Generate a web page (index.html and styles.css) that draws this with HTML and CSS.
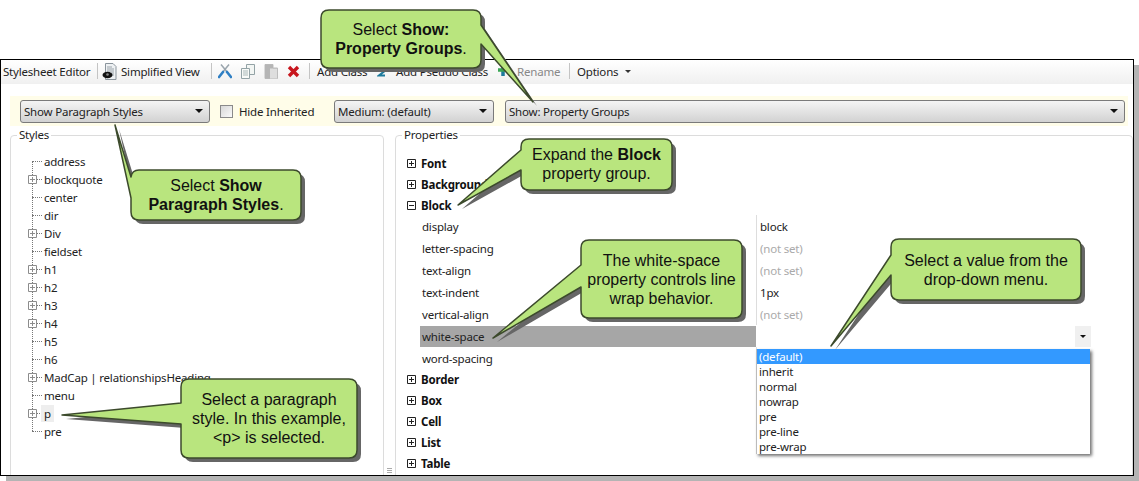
FILE: index.html
```html
<!DOCTYPE html>
<html lang="en">
<head>
  <meta charset="UTF-8">
  <title>Stylesheet Editor</title>
  <link rel="stylesheet" href="styles.css">
</head>
<body>
  <div class="window">
    <div class="toolbar">
      <span class="tool-title">Stylesheet Editor</span>
      <i class="sep"></i>
      <svg class="tool-icon icon-view" width="15" height="17" viewBox="0 0 15 17"><path d="M3.5 .5H11L14 3.5V16.5H3.5Z" fill="#eef1f3" stroke="#8a949c"/><path d="M5 4H10M5 6H12M5 8H12M9 10H12M9 12H12" stroke="#9aa3aa"/><ellipse cx="5.500" cy="12" rx="5" ry="3.200" fill="#111"/><circle cx="5.500" cy="11.500" r="1.300" fill="#888"/></svg>
      <span class="label-view">Simplified View</span>
      <i class="sep"></i>
      <svg class="tool-icon icon-cut" width="14" height="15" viewBox="0 0 14 15"><path d="M3 .5L10 9M11 .5L4 9" stroke="#9aa5ad" stroke-width="1.500" fill="none"/><path d="M9 8L13 13M5 8L1 13" stroke="#2f7fc4" stroke-width="2.600" stroke-linecap="round"/></svg>
      <svg class="tool-icon icon-copy" width="14" height="15" viewBox="0 0 14 15"><path d="M5.500 .5H13.500V10.500H5.500Z" fill="#f3f6f4" stroke="#93a3a6"/><path d="M.5 4.500H8.500V14.500H.5Z" fill="#f8faf8" stroke="#93a3a6"/><path d="M2 7H7M2 9H7M2 11H7" stroke="#a9b8b8"/></svg>
      <svg class="tool-icon icon-paste" width="14" height="15" viewBox="0 0 14 15"><path d="M1 .5H9V4H13.500V14.500H1Z" fill="#c9c9c9" stroke="#bcbcbc"/><path d="M6 5H13V14.500H6Z" fill="#dedede"/><path d="M1 .5H9V4H6V14.500H1Z" fill="#b5b5b5"/></svg>
      <svg class="tool-icon icon-del" width="13" height="13" viewBox="0 0 13 13"><path d="M2 2L11 11M11 2L2 11" stroke="#c8161e" stroke-width="3.400"/></svg>
      <i class="sep"></i>
      <span class="label-add">Add Class</span>
      <svg class="tool-icon icon-class" width="10" height="11" viewBox="0 0 10 11"><path d="M9 1.500H2.500L7 5.500L2 9.500H8" fill="none" stroke="#1d7a9c" stroke-width="2.200"/></svg>
      <span class="label-pseudo">Add Pseudo Class</span>
      <svg class="tool-icon icon-plus" width="12" height="12" viewBox="0 0 12 12"><path d="M6 1V11" stroke="#1d7a9c" stroke-width="3.500"/><path d="M1 5H11" stroke="#3aa655" stroke-width="3.500"/></svg>
      <span class="label-off">Rename</span>
      <i class="sep"></i>
      <span class="label-options">Options</span>
      <i class="caret-small"></i>
    </div>

    <div class="filterbar">
      <div class="combo combo-styles"><span>Show Paragraph Styles</span><i class="caret"></i></div>
      <span class="check"></span>
      <span class="check-label">Hide Inherited</span>
      <div class="combo combo-medium"><span>Medium: (default)</span><i class="caret"></i></div>
      <div class="combo combo-show"><span>Show: Property Groups</span><i class="caret"></i></div>
    </div>

    <div class="panels">
      <fieldset class="panel panel-styles">
        <legend>Styles</legend>
        <ul class="tree">
          <li><i class="twig"></i><span>address</span></li>
          <li><svg class="plus" width="9" height="9" viewBox="0 0 9 9"><use href="#treePlus"/></svg><i class="twig short"></i><span>blockquote</span></li>
          <li><i class="twig"></i><span>center</span></li>
          <li><i class="twig"></i><span>dir</span></li>
          <li><svg class="plus" width="9" height="9" viewBox="0 0 9 9"><use href="#treePlus"/></svg><i class="twig short"></i><span>Div</span></li>
          <li><i class="twig"></i><span>fieldset</span></li>
          <li><svg class="plus" width="9" height="9" viewBox="0 0 9 9"><use href="#treePlus"/></svg><i class="twig short"></i><span>h1</span></li>
          <li><svg class="plus" width="9" height="9" viewBox="0 0 9 9"><use href="#treePlus"/></svg><i class="twig short"></i><span>h2</span></li>
          <li><svg class="plus" width="9" height="9" viewBox="0 0 9 9"><use href="#treePlus"/></svg><i class="twig short"></i><span>h3</span></li>
          <li><svg class="plus" width="9" height="9" viewBox="0 0 9 9"><use href="#treePlus"/></svg><i class="twig short"></i><span>h4</span></li>
          <li><i class="twig"></i><span>h5</span></li>
          <li><i class="twig"></i><span>h6</span></li>
          <li><svg class="plus" width="9" height="9" viewBox="0 0 9 9"><use href="#treePlus"/></svg><i class="twig short"></i><span>MadCap | relationshipsHeading</span></li>
          <li><i class="twig"></i><span>menu</span></li>
          <li><svg class="plus" width="9" height="9" viewBox="0 0 9 9"><use href="#treePlus"/></svg><i class="twig short"></i><span class="picked">p</span></li>
          <li><i class="twig"></i><span>pre</span></li>
        </ul>
      </fieldset>

      <div class="splitter"><i></i></div>

      <fieldset class="panel panel-props">
        <legend>Properties</legend>
        <div class="group"><svg width="9" height="9" viewBox="0 0 9 9"><use href="#groupPlus"/></svg><b>Font</b></div>
        <div class="group"><svg width="9" height="9" viewBox="0 0 9 9"><use href="#groupPlus"/></svg><b>Background</b></div>
        <div class="group group-open"><svg width="9" height="9" viewBox="0 0 9 9"><path d="M.5 .5H8.500V8.500H.5ZM2 4.500H7" fill="none" stroke="#222"/></svg><b>Block</b></div>
        <div class="prop"><span class="prop-name">display</span><span class="prop-value">block</span></div>
        <div class="prop"><span class="prop-name">letter-spacing</span><span class="prop-value unset">(not set)</span></div>
        <div class="prop"><span class="prop-name">text-align</span><span class="prop-value unset">(not set)</span></div>
        <div class="prop"><span class="prop-name">text-indent</span><span class="prop-value">1px</span></div>
        <div class="prop"><span class="prop-name">vertical-align</span><span class="prop-value unset">(not set)</span></div>
        <div class="prop prop-active">
          <span class="prop-name">white-space</span>
          <span class="prop-value">
            <i class="drop-btn"><i class="caret"></i></i>
            <ul class="dropdown">
              <li class="current">(default)</li>
              <li>inherit</li>
              <li>normal</li>
              <li>nowrap</li>
              <li>pre</li>
              <li>pre-line</li>
              <li>pre-wrap</li>
            </ul>
          </span>
        </div>
        <div class="prop"><span class="prop-name">word-spacing</span><span class="prop-value"></span></div>
        <div class="group"><svg width="9" height="9" viewBox="0 0 9 9"><use href="#groupPlus"/></svg><b>Border</b></div>
        <div class="group"><svg width="9" height="9" viewBox="0 0 9 9"><use href="#groupPlus"/></svg><b>Box</b></div>
        <div class="group"><svg width="9" height="9" viewBox="0 0 9 9"><use href="#groupPlus"/></svg><b>Cell</b></div>
        <div class="group"><svg width="9" height="9" viewBox="0 0 9 9"><use href="#groupPlus"/></svg><b>List</b></div>
        <div class="group"><svg width="9" height="9" viewBox="0 0 9 9"><use href="#groupPlus"/></svg><b>Table</b></div>
      </fieldset>
    </div>
  </div>

  <!-- callout shapes, the text sits on top in .note -->
  <svg class="callouts" width="1139" height="481" viewBox="0 0 1139 481">
    <defs>
      <path id="treePlus" d="M.5 .5H8.500V8.500H.5ZM2 4.500H7M4.500 2V7" fill="#fff" stroke="#8c8c8c"/>
      <path id="groupPlus" d="M.5 .5H8.500V8.500H.5ZM2 4.500H7M4.500 2V7" fill="#fff" stroke="#222"/>
      <path id="c1" d="M329 10H473Q481 10 481 18V25L533 102L481 44V60Q481 68 473 68H329Q321 68 321 60V18Q321 10 329 10Z"/>
      <path id="c2" d="M139 170H293Q301 170 301 178V212Q301 220 293 220H139Q131 220 131 212V198L115 125L131 177Q132 170 139 170Z"/>
      <path id="c3" d="M529 139H664Q672 139 672 147V182Q672 190 664 190H529Q521 190 521 182V170L458 205L521 150V147Q521 139 529 139Z"/>
      <path id="c4" d="M589 240H734Q742 240 742 248V310Q742 318 734 318H589Q581 318 581 310V287L493 338L581 265V248Q581 240 589 240Z"/>
      <path id="c5" d="M899 239H1073Q1081 239 1081 247V292Q1081 300 1073 300H899Q891 300 891 292V275L831 346L891 255V247Q891 239 899 239Z"/>
      <path id="c6" d="M189 379H349Q357 379 357 387V450Q357 458 349 458H189Q181 458 181 450V424L62 415L181 403V387Q181 379 189 379Z"/>
    </defs>
    <g class="shape-shadow" transform="translate(4 4)">
      <use href="#c1"/><use href="#c2"/><use href="#c3"/><use href="#c4"/><use href="#c5"/><use href="#c6"/>
    </g>
    <g class="shape">
      <use href="#c1"/><use href="#c2"/><use href="#c3"/><use href="#c4"/><use href="#c5"/><use href="#c6"/>
    </g>
  </svg>

  <div class="note note-1">Select <b>Show:<br>Property Groups</b>.</div>
  <div class="note note-2">Select <b>Show<br>Paragraph Styles</b>.</div>
  <div class="note note-3">Expand the <b>Block</b><br>property group.</div>
  <div class="note note-4">The white-space<br>property controls line<br>wrap behavior.</div>
  <div class="note note-5">Select a value from the<br>drop-down menu.</div>
  <div class="note note-6">Select a paragraph<br>style. In this example,<br>&lt;p&gt; is selected.</div>
</body>
</html>
```

FILE: styles.css
```css
/* page */
html, body {
  margin: 0;
  height: 481px;
  overflow: hidden;
  background: #fff;
}

body {
  position: relative;
  padding-top: 59px;
  box-sizing: border-box;
  font-family: "Noto Sans", "Open Sans", sans-serif;
  font-size: 11.5px;
  letter-spacing: -0.2px;
  color: #222;
}

ul {
  list-style: none;
  margin: 0;
  padding: 0;
}

i {
  font-style: normal;
}

/* window */
.window {
  width: 1134px;
  height: 417px;
  box-sizing: border-box;
  border: 1px solid #000;
  background: #fff;
  box-shadow: 6px 6px 0 #b4b4b4;
  overflow: hidden;
  display: flex;
  flex-direction: column;
}

/* toolbar */
.toolbar {
  flex: none;
  height: 24px;
  box-sizing: border-box;
  padding: 0 0 2px 2px;
  display: flex;
  align-items: center;
  background: linear-gradient(#ffffff, #f0f0f0);
  white-space: nowrap;
}

.tool-title {
  width: 90px;
}

.sep {
  flex: none;
  width: 1px;
  height: 16px;
  margin: 0 7px 0 4px;
  background: #c4c4c4;
}

.tool-icon {
  flex: none;
}

.icon-view {
  margin-left: -3px;
}

.label-view {
  width: 86px;
  margin-left: 4px;
}

.icon-cut {
  margin-left: -1px;
}

.icon-copy,
.icon-paste {
  margin-left: 9px;
}

.icon-del {
  margin: 0 5px 0 9px;
}

.label-add {
  width: 52px;
}

.icon-class {
  margin: 0 9px 0 8px;
}

.label-pseudo {
  width: 94px;
}

.icon-plus {
  margin: 0 8px 0 7px;
}

.label-off {
  width: 48px;
  color: #888;
}

.label-options {
  width: 42px;
}

.caret-small {
  width: 0;
  height: 0;
  margin-left: 6px;
  border: 3px solid transparent;
  border-top-color: #333;
  border-bottom: 0;
}

/* filter row */
.filterbar {
  flex: none;
  height: 30px;
  margin: 12px 5px 0 9px;
  padding: 0 3px 0 10px;
  display: flex;
  align-items: center;
  box-sizing: border-box;
  background: #fffde9;
}

.combo {
  flex: none;
  height: 23px;
  box-sizing: border-box;
  padding: 0 6px 0 3px;
  display: flex;
  align-items: center;
  justify-content: space-between;
  border: 1px solid #7a7a7a;
  border-radius: 3px;
  background: linear-gradient(#f4f4f4, #d2d2d2);
}

.combo-styles {
  width: 190px;
}

.combo-medium {
  width: 160px;
  margin-left: 20px;
}

.combo-show {
  width: 620px;
  margin-left: 11px;
}

.caret {
  display: block;
  width: 0;
  height: 0;
  border-left: 4px solid transparent;
  border-right: 4px solid transparent;
  border-top: 4px solid #111;
}

.check {
  flex: none;
  width: 13px;
  height: 13px;
  box-sizing: border-box;
  margin-left: 10px;
  border: 1px solid #8a8a8a;
  background: linear-gradient(135deg, #d8d8d8, #fafafa);
}

.check-label {
  flex: none;
  width: 75px;
  margin-left: 6px;
  white-space: nowrap;
}

/* panels */
.panels {
  flex: 1;
  min-height: 0;
  margin: 1px 0 0 9px;
  display: flex;
}

.panel {
  margin: 0;
  padding: 0;
  min-width: 0;
  height: 360px;
  border: 1px solid #dcdcdc;
  border-radius: 4px;
}

.panel legend {
  margin-left: 6px;
  padding: 0 2px;
  line-height: 16px;
}

.panel-styles {
  flex: none;
  box-sizing: border-box;
  width: 374px;
}

.splitter {
  flex: none;
  width: 11px;
  display: flex;
  justify-content: center;
  align-items: flex-end;
  padding-bottom: 2px;
}

.splitter i {
  width: 5px;
  height: 5px;
  background: repeating-linear-gradient(#aaa 0 1px, transparent 1px 2px);
}

.panel-props {
  flex: 1;
  box-sizing: border-box;
  padding-top: 10px;
}

/* tree */
.tree {
  position: relative;
  margin: 9px 0 0 21px;
}

.tree::before {
  content: "";
  position: absolute;
  left: 0;
  top: 9px;
  bottom: 9px;
  border-left: 1px dotted #777;
}

.tree li {
  height: 18px;
  display: flex;
  align-items: center;
  white-space: nowrap;
}

.twig {
  width: 10px;
  margin-right: 2px;
  border-top: 1px dotted #777;
}

.twig.short {
  width: 5px;
}

.plus {
  flex: none;
  margin-left: -4px;
  position: relative;
}

.picked {
  padding: 1px 3px;
  margin-left: -3px;
  background: #eeeeee;
}

/* property grid */
.group {
  height: 21px;
  margin-left: 11px;
  display: flex;
  align-items: center;
  gap: 5px;
}

.group-open {
  height: 20px;
}

.group svg {
  flex: none;
}

.group b {
  font-weight: 700;
  color: #111;
}

.prop {
  height: 22px;
  margin-left: 24px;
  display: flex;
  align-items: center;
}

.prop-name {
  width: 334px;
  padding-left: 2px;
}

.prop-value {
  position: relative;
  width: 331px;
  height: 100%;
  padding-left: 3px;
  display: flex;
  align-items: center;
  border-left: 1px solid #dddddd;
}

.prop-active .prop-name {
  height: 21px;
  line-height: 21px;
  background: #a6a6a6;
}

.prop-active .prop-value {
  border-left-color: transparent;
}

.unset {
  color: #aaa;
}

.drop-btn {
  position: absolute;
  right: 0;
  top: 1px;
  width: 16px;
  height: 21px;
  display: flex;
  align-items: center;
  justify-content: center;
  background: #f0f0f0;
}

.drop-btn .caret {
  border-left-width: 3px;
  border-right-width: 3px;
  border-top-width: 3px;
}

.dropdown {
  position: absolute;
  left: -1px;
  top: 24px;
  width: 333px;
  z-index: 5;
  background: #fff;
  border-left: 1px solid #bbb;
  box-shadow: 2px 2px 3px rgba(0, 0, 0, .55);
}

.dropdown li {
  height: 15px;
  line-height: 15px;
  padding-left: 2px;
}

.dropdown .current {
  background: #3399ff;
  color: #fff;
}

/* callouts */
.callouts {
  position: absolute;
  left: 0;
  top: 0;
  z-index: 10;
}

.shape-shadow {
  fill: #666;
}

.shape {
  fill: #b9e57e;
  stroke: #3c4a2c;
  stroke-width: 1.5;
  stroke-linejoin: round;
}

.note {
  position: absolute;
  z-index: 11;
  box-sizing: border-box;
  font-family: "Liberation Sans", Arial, sans-serif;
  font-size: 16px;
  line-height: 19px;
  letter-spacing: 0;
  text-align: center;
  color: #111;
  white-space: nowrap;
}

.note-1 { left: 321px; top: 10px; width: 160px; height: 58px; padding-top: 10px; }
.note-2 { left: 131px; top: 170px; width: 170px; height: 50px; padding-top: 6px; }
.note-3 { left: 521px; top: 139px; width: 151px; height: 51px; padding-top: 6px; }
.note-4 { left: 581px; top: 240px; width: 161px; height: 78px; padding-top: 11px; }
.note-5 { left: 891px; top: 239px; width: 190px; height: 61px; padding-top: 12px; }
.note-6 { left: 181px; top: 379px; width: 176px; height: 79px; padding-top: 11px; }
```
